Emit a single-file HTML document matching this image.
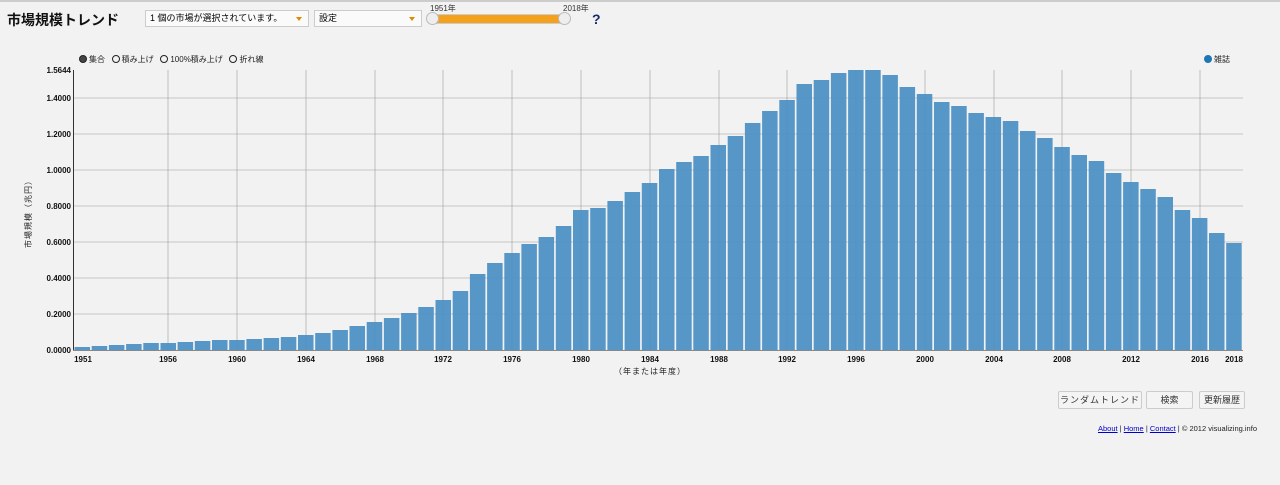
<!DOCTYPE html><html><head><meta charset="utf-8"><style>
body{margin:0;width:1280px;height:485px;background:#f2f2f2;font-family:"Liberation Sans","Noto Sans CJK JP",sans-serif;position:relative;overflow:hidden}
.a{position:absolute;white-space:nowrap}
.dd{position:absolute;height:15px;border:1px solid #ccc;background:#fafafa;font-size:9px;line-height:15px;padding-left:4px;box-sizing:content-box}
.dd:after{content:"";position:absolute;right:6px;top:6px;border-left:3px solid transparent;border-right:3px solid transparent;border-top:4px solid #e08a00}
.btn{position:absolute;top:391px;height:16px;border:1px solid #ccc;border-radius:2px;background:#f4f4f4;font-size:9px;line-height:16px;text-align:center;color:#333;white-space:nowrap;overflow:hidden}
.f a{color:#00c;text-decoration:underline}
.r{display:inline-block;width:6px;height:6px;border:1.5px solid #222;border-radius:50%;vertical-align:-1px;margin-right:2px}
</style></head><body>
<div class="a" style="left:0;top:0;width:1280px;height:2px;background:#ccc"></div>
<div class="a" style="left:7px;top:10px;font-size:14px;font-weight:bold;color:#111">市場規模トレンド</div>
<div class="dd" style="left:145px;top:10px;width:158px">1 個の市場が選択されています。</div>
<div class="dd" style="left:314px;top:10px;width:102px">設定</div>
<div class="a" style="left:430px;top:3px;font-size:8px;color:#333">1951年</div>
<div class="a" style="left:563px;top:3px;font-size:8px;color:#333">2018年</div>
<div class="a" style="left:432px;top:14px;width:133px;height:8px;background:#f4a21e;border:1px solid #ccc"></div>
<div class="a" style="left:426px;top:12px;width:11px;height:11px;border-radius:50%;background:#eee;border:1px solid #bbb"></div>
<div class="a" style="left:558px;top:12px;width:11px;height:11px;border-radius:50%;background:#eee;border:1px solid #bbb"></div>
<div class="a" style="left:592px;top:11px;font-size:14px;font-weight:bold;color:#1a2a6a">?</div>
<div class="a" style="left:79px;top:54px;font-size:8px;color:#222"><span class="r" style="background:#444"></span>集合 &nbsp;&nbsp;<span class="r"></span>積み上げ &nbsp;&nbsp;<span class="r"></span>100%積み上げ &nbsp;&nbsp;<span class="r"></span>折れ線</div>
<div class="a" style="left:1204px;top:54px;font-size:8px;color:#222"><span class="r" style="background:#1f77b4;border-color:#1f77b4"></span>雑誌</div>
<svg class="a" style="left:0;top:0" width="1280" height="485" font-family="Liberation Sans,sans-serif" font-size="8" font-weight="bold">
<g stroke="#999" stroke-width="0.6">
<line x1="74" x2="1243" y1="314" y2="314"/><line x1="74" x2="1243" y1="278" y2="278"/><line x1="74" x2="1243" y1="242" y2="242"/><line x1="74" x2="1243" y1="206" y2="206"/><line x1="74" x2="1243" y1="170" y2="170"/><line x1="74" x2="1243" y1="134" y2="134"/><line x1="74" x2="1243" y1="98" y2="98"/>
<line x1="168" x2="168" y1="70" y2="350"/><line x1="237" x2="237" y1="70" y2="350"/><line x1="306" x2="306" y1="70" y2="350"/><line x1="375" x2="375" y1="70" y2="350"/><line x1="443" x2="443" y1="70" y2="350"/><line x1="512" x2="512" y1="70" y2="350"/><line x1="581" x2="581" y1="70" y2="350"/><line x1="650" x2="650" y1="70" y2="350"/><line x1="719" x2="719" y1="70" y2="350"/><line x1="787" x2="787" y1="70" y2="350"/><line x1="856" x2="856" y1="70" y2="350"/><line x1="925" x2="925" y1="70" y2="350"/><line x1="994" x2="994" y1="70" y2="350"/><line x1="1062" x2="1062" y1="70" y2="350"/><line x1="1131" x2="1131" y1="70" y2="350"/><line x1="1200" x2="1200" y1="70" y2="350"/>
</g>
<g fill="#4a8fc4" fill-opacity="0.92">
<rect x="74.5" y="347" width="15.5" height="3"/><rect x="91.7" y="346" width="15.5" height="4"/><rect x="108.9" y="345" width="15.5" height="5"/><rect x="126.1" y="344" width="15.5" height="6"/><rect x="143.3" y="343" width="15.5" height="7"/><rect x="160.5" y="343" width="15.5" height="7"/><rect x="177.6" y="342" width="15.5" height="8"/><rect x="194.8" y="341" width="15.5" height="9"/><rect x="212" y="340" width="15.5" height="10"/><rect x="229.2" y="340" width="15.5" height="10"/><rect x="246.4" y="339" width="15.5" height="11"/><rect x="263.6" y="338" width="15.5" height="12"/><rect x="280.8" y="337" width="15.5" height="13"/><rect x="298" y="335" width="15.5" height="15"/><rect x="315.2" y="333" width="15.5" height="17"/><rect x="332.4" y="330" width="15.5" height="20"/><rect x="349.5" y="326" width="15.5" height="24"/><rect x="366.7" y="322" width="15.5" height="28"/><rect x="383.9" y="318" width="15.5" height="32"/><rect x="401.1" y="313" width="15.5" height="37"/><rect x="418.3" y="307" width="15.5" height="43"/><rect x="435.5" y="300" width="15.5" height="50"/><rect x="452.7" y="291" width="15.5" height="59"/><rect x="469.9" y="274" width="15.5" height="76"/><rect x="487.1" y="263" width="15.5" height="87"/><rect x="504.3" y="253" width="15.5" height="97"/><rect x="521.4" y="244" width="15.5" height="106"/><rect x="538.6" y="237" width="15.5" height="113"/><rect x="555.8" y="226" width="15.5" height="124"/><rect x="573" y="210" width="15.5" height="140"/><rect x="590.2" y="208" width="15.5" height="142"/><rect x="607.4" y="201" width="15.5" height="149"/><rect x="624.6" y="192" width="15.5" height="158"/><rect x="641.8" y="183" width="15.5" height="167"/><rect x="659" y="169" width="15.5" height="181"/><rect x="676.2" y="162" width="15.5" height="188"/><rect x="693.3" y="156" width="15.5" height="194"/><rect x="710.5" y="145" width="15.5" height="205"/><rect x="727.7" y="136" width="15.5" height="214"/><rect x="744.9" y="123" width="15.5" height="227"/><rect x="762.1" y="111" width="15.5" height="239"/><rect x="779.3" y="100" width="15.5" height="250"/><rect x="796.5" y="84" width="15.5" height="266"/><rect x="813.7" y="80" width="15.5" height="270"/><rect x="830.9" y="73" width="15.5" height="277"/><rect x="848.1" y="70" width="15.5" height="280"/><rect x="865.2" y="70" width="15.5" height="280"/><rect x="882.4" y="75" width="15.5" height="275"/><rect x="899.6" y="87" width="15.5" height="263"/><rect x="916.8" y="94" width="15.5" height="256"/><rect x="934" y="102" width="15.5" height="248"/><rect x="951.2" y="106" width="15.5" height="244"/><rect x="968.4" y="113" width="15.5" height="237"/><rect x="985.6" y="117" width="15.5" height="233"/><rect x="1002.8" y="121" width="15.5" height="229"/><rect x="1020" y="131" width="15.5" height="219"/><rect x="1037.1" y="138" width="15.5" height="212"/><rect x="1054.3" y="147" width="15.5" height="203"/><rect x="1071.5" y="155" width="15.5" height="195"/><rect x="1088.7" y="161" width="15.5" height="189"/><rect x="1105.9" y="173" width="15.5" height="177"/><rect x="1123.1" y="182" width="15.5" height="168"/><rect x="1140.3" y="189" width="15.5" height="161"/><rect x="1157.5" y="197" width="15.5" height="153"/><rect x="1174.7" y="210" width="15.5" height="140"/><rect x="1191.9" y="218" width="15.5" height="132"/><rect x="1209" y="233" width="15.5" height="117"/><rect x="1226.2" y="243" width="15.5" height="107"/>
</g>
<line x1="73.5" x2="73.5" y1="70" y2="351" stroke="#333"/>
<line x1="73" x2="1243" y1="350.5" y2="350.5" stroke="#888"/>
<g text-anchor="end" fill="#111">
<text x="71" y="73">1.5644</text><text x="71" y="101">1.4000</text><text x="71" y="137">1.2000</text><text x="71" y="173">1.0000</text><text x="71" y="209">0.8000</text><text x="71" y="245">0.6000</text><text x="71" y="281">0.4000</text><text x="71" y="317">0.2000</text><text x="71" y="353">0.0000</text>
</g>
<g text-anchor="middle" fill="#111">
<text x="83" y="362">1951</text><text x="168" y="362">1956</text><text x="237" y="362">1960</text><text x="306" y="362">1964</text><text x="375" y="362">1968</text><text x="443" y="362">1972</text><text x="512" y="362">1976</text><text x="581" y="362">1980</text><text x="650" y="362">1984</text><text x="719" y="362">1988</text><text x="787" y="362">1992</text><text x="856" y="362">1996</text><text x="925" y="362">2000</text><text x="994" y="362">2004</text><text x="1062" y="362">2008</text><text x="1131" y="362">2012</text><text x="1200" y="362">2016</text><text x="1234" y="362">2018</text>
</g>
<text x="650" y="374" text-anchor="middle" font-weight="normal" font-size="8" fill="#222" letter-spacing="1" font-family="Liberation Sans,Noto Sans CJK JP,sans-serif">（年または年度）</text>
<text transform="translate(31,212) rotate(-90)" text-anchor="middle" font-weight="normal" font-size="8" fill="#222" letter-spacing="1" font-family="Liberation Sans,Noto Sans CJK JP,sans-serif">市場規模（兆円）</text>
</svg>
<div class="btn" style="left:1058px;width:82px;letter-spacing:1px">ランダムトレンド</div>
<div class="btn" style="left:1146px;width:45px">検索</div>
<div class="btn" style="left:1199px;width:44px">更新履歴</div>
<div class="a f" style="right:23px;top:424px;font-size:7.5px;color:#222"><a>About</a> | <a>Home</a> | <a>Contact</a> | © 2012 visualizing.info</div>
</body></html>
